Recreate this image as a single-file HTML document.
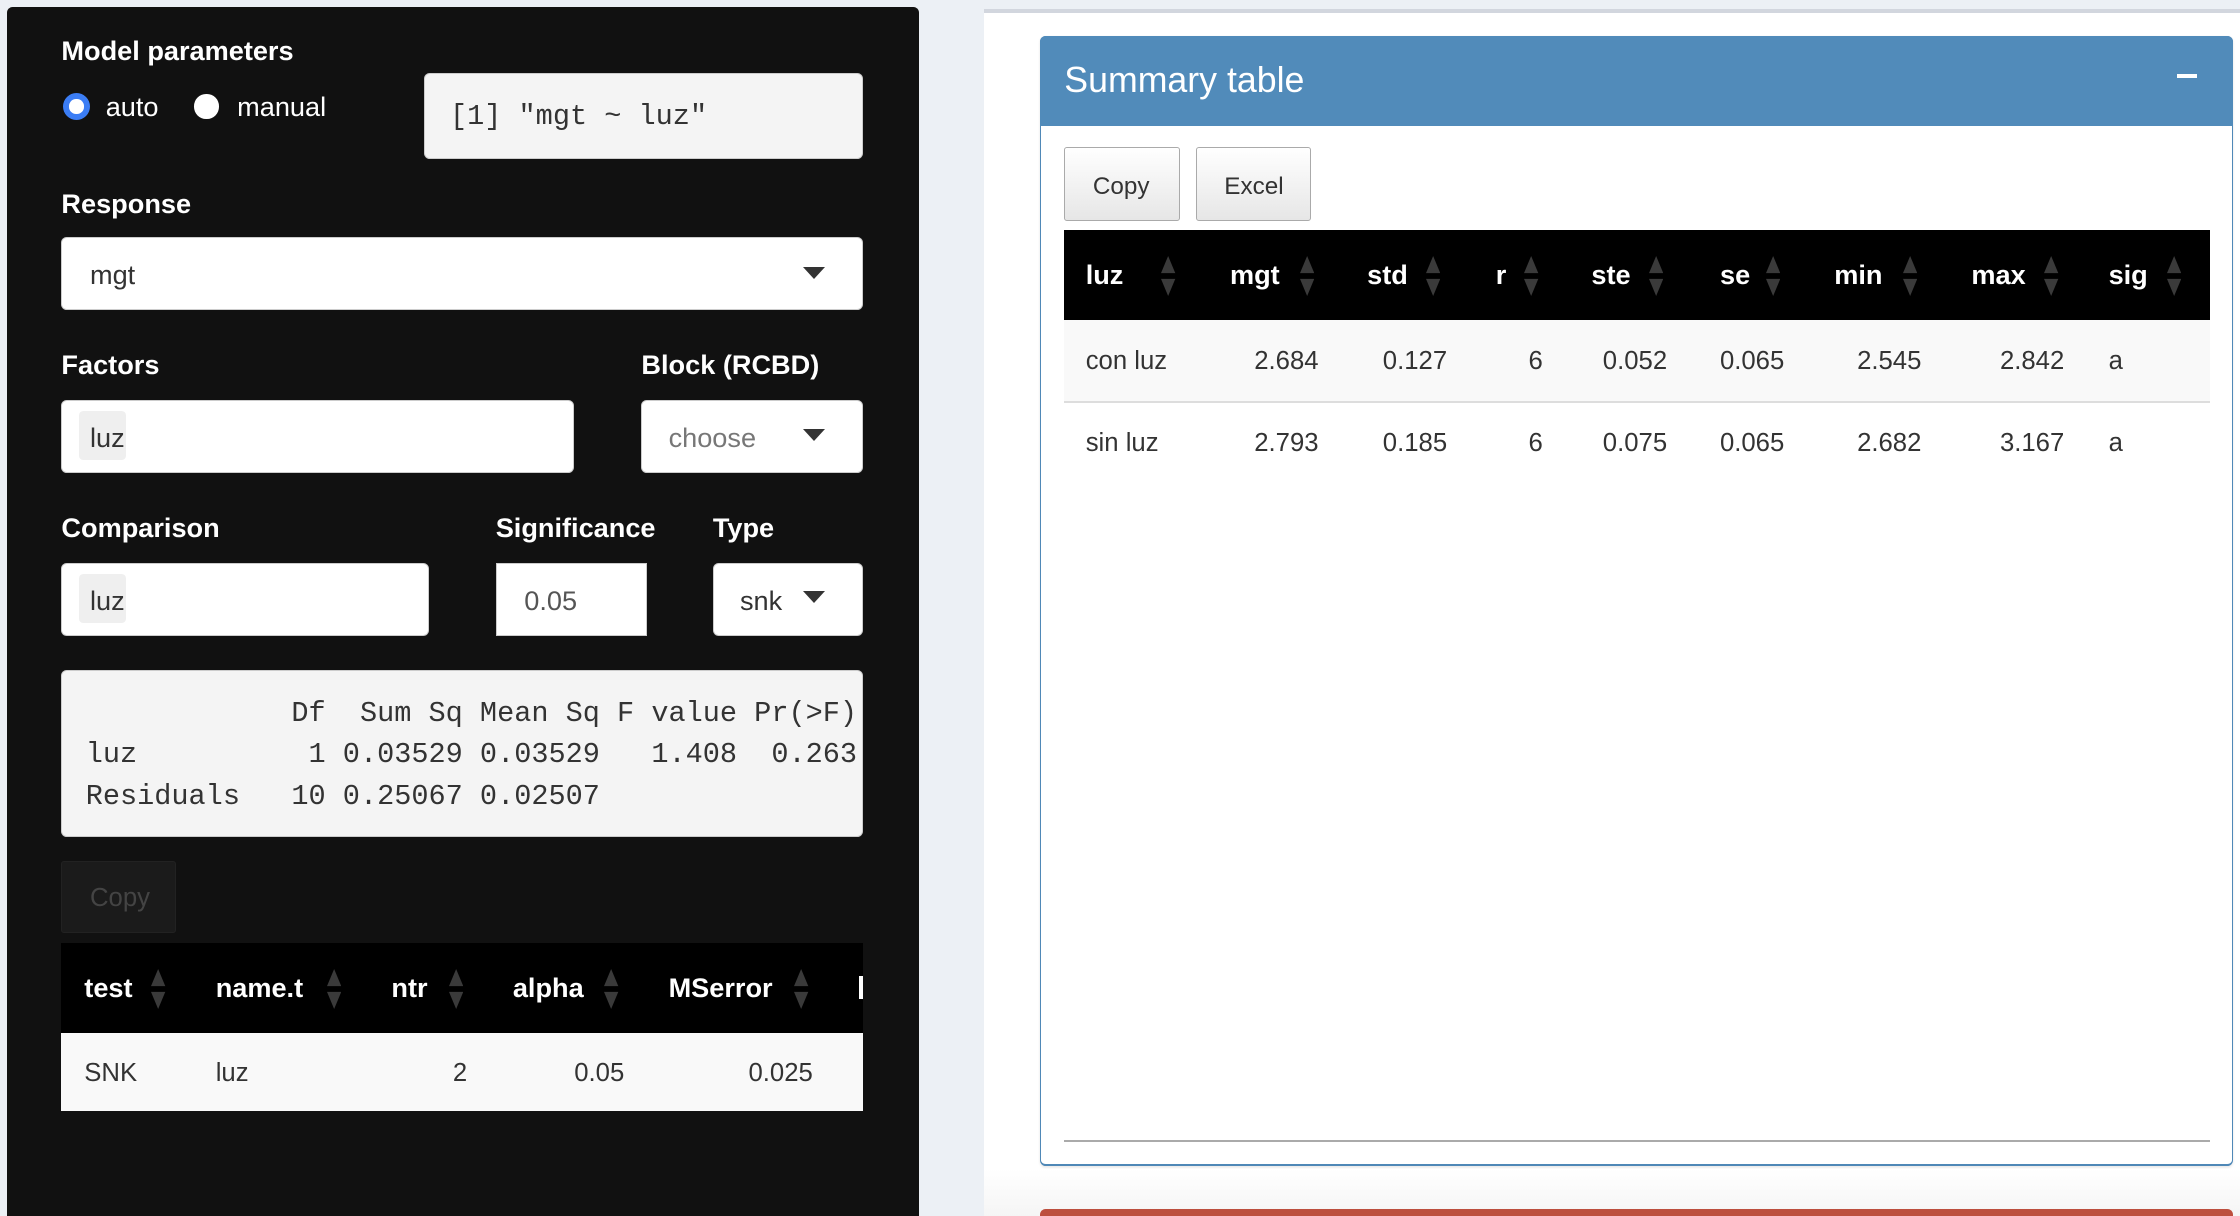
<!DOCTYPE html>
<html><head><meta charset="utf-8"><style>
html,body{margin:0;padding:0;background:#ecf0f5;overflow:hidden;width:2240px;height:1216px}
#w{zoom:1.4285714;position:relative;width:1568px;height:851.2px;font-family:"Liberation Sans",sans-serif;}
.a{position:absolute}
.t{position:absolute;white-space:nowrap;line-height:20px;font-size:18px;margin-top:1px}
.b{font-weight:bold;color:#fff;font-size:19px}
.m{font-family:"Liberation Mono",monospace;font-size:20px;color:#333;white-space:pre;position:absolute;line-height:29px;margin-top:1px}
.in{position:absolute;background:#fff;border-radius:4px;border:1px solid #ccc;box-sizing:border-box}
.chip{position:absolute;background:#efefef;border-radius:3px}
.car{position:absolute;width:0;height:0;border-left:8px solid transparent;border-right:8px solid transparent;border-top:9px solid #333}
.r{text-align:right}
</style></head><body><div id="w">
<div class="a" style="left:5px;top:5px;width:638px;height:860px;background:#111;border-radius:4px"></div>
<div class="t b" style="left:43px;top:25px">Model parameters</div>
<div class="a" style="left:44px;top:65px;width:19px;height:19px;border-radius:50%;background:#3b7df5"></div>
<div class="a" style="left:48.5px;top:69.5px;width:10px;height:10px;border-radius:50%;background:#fff"></div>
<div class="t" style="left:74px;top:64px;color:#fff;font-size:19px">auto</div>
<div class="a" style="left:136px;top:66px;width:17px;height:17px;border-radius:50%;background:#fff"></div>
<div class="t" style="left:166px;top:64px;color:#fff;font-size:19px">manual</div>
<div class="a" style="left:297px;top:51px;width:307px;height:60px;background:#f4f4f4;border-radius:4px;border:1px solid #ccc;box-sizing:border-box"></div>
<div class="m" style="left:315px;top:66px">[1] "mgt ~ luz"</div>

<div class="t b" style="left:43px;top:132px">Response</div>
<div class="in" style="left:43px;top:166px;width:561px;height:51px"></div>
<div class="t" style="left:63px;top:182px;color:#333;font-size:19px">mgt</div>
<div class="car" style="left:562px;top:187px"></div>

<div class="t b" style="left:43px;top:245px">Factors</div>
<div class="t b" style="left:449px;top:245px">Block (RCBD)</div>
<div class="in" style="left:43px;top:280px;width:359px;height:51px"></div>
<div class="chip" style="left:55px;top:288px;width:33px;height:34px"></div>
<div class="t" style="left:63px;top:296px;color:#333;font-size:19px">luz</div>
<div class="in" style="left:449px;top:280px;width:155px;height:51px"></div>
<div class="t" style="left:468px;top:296px;color:#777;font-size:19px">choose</div>
<div class="car" style="left:562px;top:300px"></div>

<div class="t b" style="left:43px;top:359px">Comparison</div>
<div class="t b" style="left:347px;top:359px">Significance</div>
<div class="t b" style="left:499px;top:359px">Type</div>
<div class="in" style="left:43px;top:394px;width:257px;height:51px"></div>
<div class="chip" style="left:55px;top:402px;width:33px;height:34px"></div>
<div class="t" style="left:63px;top:410px;color:#333;font-size:19px">luz</div>
<div class="in" style="left:347px;top:394px;width:106px;height:51px;border-radius:0"></div>
<div class="t" style="left:367px;top:410px;color:#555;font-size:19px">0.05</div>
<div class="in" style="left:499px;top:394px;width:105px;height:51px"></div>
<div class="t" style="left:518px;top:410px;color:#333;font-size:19px">snk</div>
<div class="car" style="left:562px;top:414px"></div>

<div class="a" style="left:43px;top:469px;width:561px;height:117px;background:#f4f4f4;border-radius:4px;border:1px solid #ccc;box-sizing:border-box"></div>
<div class="m" style="left:60px;top:484px">            Df  Sum Sq Mean Sq F value Pr(&gt;F)
luz          1 0.03529 0.03529   1.408  0.263
Residuals   10 0.25067 0.02507</div>

<div class="a" style="left:43px;top:603px;width:80px;height:50px;background:#1b1b1b;border:1px solid #222;box-sizing:border-box;border-radius:2px"></div>
<div class="t" style="left:63px;top:618px;color:#444;font-size:18px">Copy</div>

<div class="a" style="left:43px;top:660px;width:561px;height:64px;background:#000;overflow:hidden"></div>
<div class="a" style="left:43px;top:723px;width:561px;height:55px;background:#f9f9f9"></div>
<div class="t b" style="left:59px;top:681px">test</div>
<div class="t b" style="left:151px;top:681px">name.t</div>
<div class="t b" style="left:274px;top:681px">ntr</div>
<div class="t b" style="left:359px;top:681px">alpha</div>
<div class="t b" style="left:468px;top:681px">MSerror</div>
<div class="a" style="left:601px;top:683px;width:3px;height:16px;background:#fff"></div>
<svg class="a" style="left:106px;top:678px" width="10" height="28"><polygon points="5,0 10,12 0,12" fill="#3a3a3a"/><polygon points="0,16 10,16 5,28" fill="#3a3a3a"/></svg>
<svg class="a" style="left:229px;top:678px" width="10" height="28"><polygon points="5,0 10,12 0,12" fill="#3a3a3a"/><polygon points="0,16 10,16 5,28" fill="#3a3a3a"/></svg>
<svg class="a" style="left:314px;top:678px" width="10" height="28"><polygon points="5,0 10,12 0,12" fill="#3a3a3a"/><polygon points="0,16 10,16 5,28" fill="#3a3a3a"/></svg>
<svg class="a" style="left:423px;top:678px" width="10" height="28"><polygon points="5,0 10,12 0,12" fill="#3a3a3a"/><polygon points="0,16 10,16 5,28" fill="#3a3a3a"/></svg>
<svg class="a" style="left:556px;top:678px" width="10" height="28"><polygon points="5,0 10,12 0,12" fill="#3a3a3a"/><polygon points="0,16 10,16 5,28" fill="#3a3a3a"/></svg>
<div class="t" style="left:59px;top:740px;color:#333">SNK</div>
<div class="t" style="left:151px;top:740px;color:#333">luz</div>
<div class="t r" style="left:227px;width:100px;top:740px;color:#333">2</div>
<div class="t r" style="left:337px;width:100px;top:740px;color:#333">0.05</div>
<div class="t r" style="left:469px;width:100px;top:740px;color:#333">0.025</div>

<div class="a" style="left:689px;top:6px;width:879px;height:860px;background:#fff;border-top:3px solid #d2d6de"></div>
<div class="a" style="left:728px;top:25px;width:835px;height:791px;border:1px solid #4f88b7;border-bottom-width:2px;border-radius:4px;box-sizing:border-box;background:#fff;box-shadow:0 1px 2px rgba(0,0,0,.1)"></div>
<div class="a" style="left:728px;top:25px;width:835px;height:63px;background:#518bba;border-radius:4px 4px 0 0"></div>
<div class="t" style="left:745px;top:43px;color:#fff;font-size:25px;line-height:25px">Summary table</div>
<div class="a" style="left:1524px;top:52px;width:14px;height:2.5px;background:#fff"></div>

<div class="a" style="left:745px;top:103px;width:81px;height:52px;border:1px solid #aaa;border-radius:2px;box-sizing:border-box;background:linear-gradient(#fff,#e6e6e6)"></div>
<div class="t" style="left:765px;top:120px;color:#333;font-size:17px">Copy</div>
<div class="a" style="left:837px;top:103px;width:81px;height:52px;border:1px solid #aaa;border-radius:2px;box-sizing:border-box;background:linear-gradient(#fff,#e6e6e6)"></div>
<div class="t" style="left:857px;top:120px;color:#333;font-size:17px">Excel</div>

<div class="a" style="left:745px;top:161px;width:802px;height:63px;background:#000"></div>
<div class="a" style="left:745px;top:224px;width:802px;height:57px;background:#f9f9f9"></div>
<div class="a" style="left:745px;top:281px;width:802px;height:1px;background:#ddd"></div>
<div class="t b" style="left:760px;top:182px">luz</div>
<div class="t b" style="left:861px;top:182px">mgt</div>
<div class="t b" style="left:957px;top:182px">std</div>
<div class="t b" style="left:1047px;top:182px">r</div>
<div class="t b" style="left:1114px;top:182px">ste</div>
<div class="t b" style="left:1204px;top:182px">se</div>
<div class="t b" style="left:1284px;top:182px">min</div>
<div class="t b" style="left:1380px;top:182px">max</div>
<div class="t b" style="left:1476px;top:182px">sig</div>
<svg class="a" style="left:813px;top:179px" width="10" height="28"><polygon points="5,0 10,12 0,12" fill="#3a3a3a"/><polygon points="0,16 10,16 5,28" fill="#3a3a3a"/></svg>
<svg class="a" style="left:910px;top:179px" width="10" height="28"><polygon points="5,0 10,12 0,12" fill="#3a3a3a"/><polygon points="0,16 10,16 5,28" fill="#3a3a3a"/></svg>
<svg class="a" style="left:998px;top:179px" width="10" height="28"><polygon points="5,0 10,12 0,12" fill="#3a3a3a"/><polygon points="0,16 10,16 5,28" fill="#3a3a3a"/></svg>
<svg class="a" style="left:1067px;top:179px" width="10" height="28"><polygon points="5,0 10,12 0,12" fill="#3a3a3a"/><polygon points="0,16 10,16 5,28" fill="#3a3a3a"/></svg>
<svg class="a" style="left:1154px;top:179px" width="10" height="28"><polygon points="5,0 10,12 0,12" fill="#3a3a3a"/><polygon points="0,16 10,16 5,28" fill="#3a3a3a"/></svg>
<svg class="a" style="left:1236px;top:179px" width="10" height="28"><polygon points="5,0 10,12 0,12" fill="#3a3a3a"/><polygon points="0,16 10,16 5,28" fill="#3a3a3a"/></svg>
<svg class="a" style="left:1332px;top:179px" width="10" height="28"><polygon points="5,0 10,12 0,12" fill="#3a3a3a"/><polygon points="0,16 10,16 5,28" fill="#3a3a3a"/></svg>
<svg class="a" style="left:1431px;top:179px" width="10" height="28"><polygon points="5,0 10,12 0,12" fill="#3a3a3a"/><polygon points="0,16 10,16 5,28" fill="#3a3a3a"/></svg>
<svg class="a" style="left:1517px;top:179px" width="10" height="28"><polygon points="5,0 10,12 0,12" fill="#3a3a3a"/><polygon points="0,16 10,16 5,28" fill="#3a3a3a"/></svg>

<div class="t" style="left:760px;top:242px;color:#333">con luz</div>
<div class="t r" style="left:823px;width:100px;top:242px;color:#333">2.684</div>
<div class="t r" style="left:913px;width:100px;top:242px;color:#333">0.127</div>
<div class="t r" style="left:980px;width:100px;top:242px;color:#333">6</div>
<div class="t r" style="left:1067px;width:100px;top:242px;color:#333">0.052</div>
<div class="t r" style="left:1149px;width:100px;top:242px;color:#333">0.065</div>
<div class="t r" style="left:1245px;width:100px;top:242px;color:#333">2.545</div>
<div class="t r" style="left:1345px;width:100px;top:242px;color:#333">2.842</div>
<div class="t" style="left:1476px;top:242px;color:#333">a</div>

<div class="t" style="left:760px;top:299px;color:#333">sin luz</div>
<div class="t r" style="left:823px;width:100px;top:299px;color:#333">2.793</div>
<div class="t r" style="left:913px;width:100px;top:299px;color:#333">0.185</div>
<div class="t r" style="left:980px;width:100px;top:299px;color:#333">6</div>
<div class="t r" style="left:1067px;width:100px;top:299px;color:#333">0.075</div>
<div class="t r" style="left:1149px;width:100px;top:299px;color:#333">0.065</div>
<div class="t r" style="left:1245px;width:100px;top:299px;color:#333">2.682</div>
<div class="t r" style="left:1345px;width:100px;top:299px;color:#333">3.167</div>
<div class="t" style="left:1476px;top:299px;color:#333">a</div>

<div class="a" style="left:745px;top:798px;width:802px;height:1.5px;background:#aaa"></div>
<div class="a" style="left:689px;top:818px;width:879px;height:40px;background:linear-gradient(#fff,#f3f3f3)"></div>
<div class="a" style="left:728px;top:846px;width:835px;height:10px;background:#bd4f3e;border-radius:4px 4px 0 0"></div>
</div></body></html>
